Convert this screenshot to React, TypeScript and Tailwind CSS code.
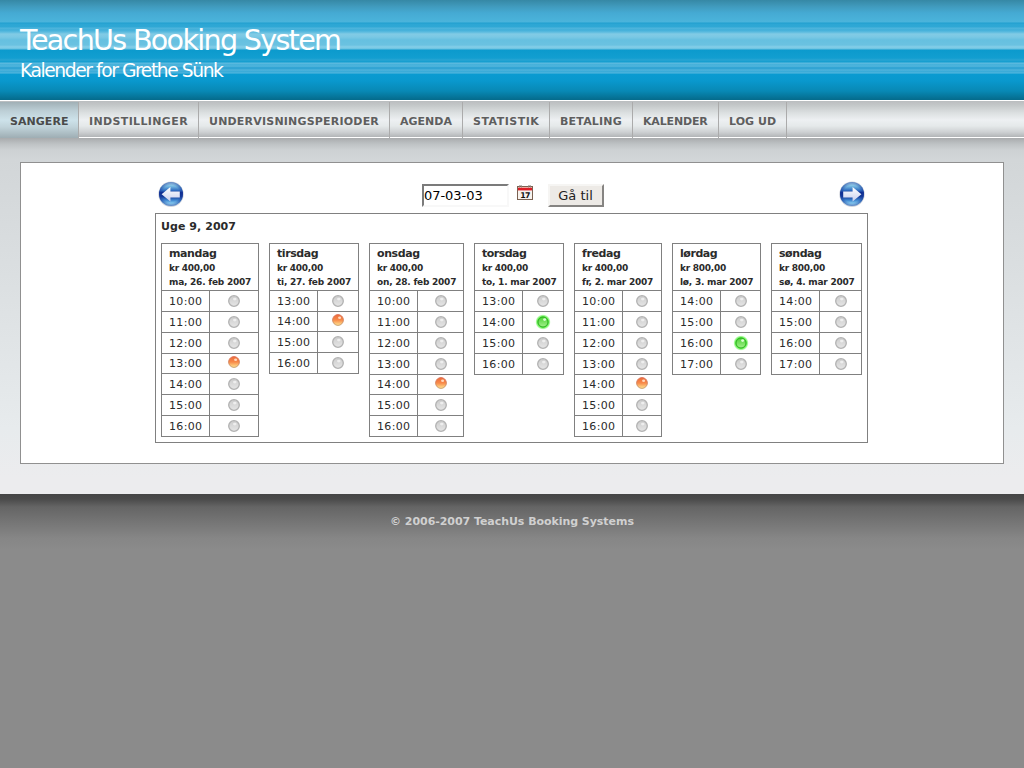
type LedState = 'free' | 'busy' | 'open';

type Day = {
  name: string;
  nameTracking: string;
  price: string;
  date: string;
  width: string;
  slots: [string, LedState][];
};

const NAV = [
  { label: 'SANGERE', cls: 'w-[79px] tracking-[0.05px]' },
  { label: 'INDSTILLINGER', cls: 'w-[120px] tracking-[0.36px]' },
  { label: 'UNDERVISNINGSPERIODER', cls: 'w-[191px] tracking-[0.2px]' },
  { label: 'AGENDA', cls: 'w-[73px] tracking-[0.02px]' },
  { label: 'STATISTIK', cls: 'w-[87px] tracking-[0.5px]' },
  { label: 'BETALING', cls: 'w-[83px] tracking-[0.2px]' },
  { label: 'KALENDER', cls: 'w-[86px] tracking-[-0.15px]' },
  { label: 'LOG UD', cls: 'w-[68px] tracking-[0.05px]' },
];

function slots(from: number, to: number, marks: Record<number, LedState> = {}): [string, LedState][] {
  const list: [string, LedState][] = [];
  for (let h = from; h <= to; h++) list.push([`${h}:00`, marks[h] ?? 'free']);
  return list;
}

const DAYS: Day[] = [
  { name: 'mandag', nameTracking: 'tracking-[-0.4px]', price: 'kr 400,00', date: 'ma, 26. feb 2007', width: 'w-[98px]', slots: slots(10, 16, { 13: 'busy' }) },
  { name: 'tirsdag', nameTracking: 'tracking-[-0.42px]', price: 'kr 400,00', date: 'ti, 27. feb 2007', width: 'w-[90px]', slots: slots(13, 16, { 14: 'busy' }) },
  { name: 'onsdag', nameTracking: 'tracking-[-0.42px]', price: 'kr 400,00', date: 'on, 28. feb 2007', width: 'w-[95px]', slots: slots(10, 16, { 14: 'busy' }) },
  { name: 'torsdag', nameTracking: 'tracking-[-0.52px]', price: 'kr 400,00', date: 'to, 1. mar 2007', width: 'w-[90px]', slots: slots(13, 16, { 14: 'open' }) },
  { name: 'fredag', nameTracking: 'tracking-[-0.38px]', price: 'kr 400,00', date: 'fr, 2. mar 2007', width: 'w-[88px]', slots: slots(10, 16, { 14: 'busy' }) },
  { name: 'lørdag', nameTracking: 'tracking-[-0.45px]', price: 'kr 800,00', date: 'lø, 3. mar 2007', width: 'w-[89px]', slots: slots(14, 17, { 16: 'open' }) },
  { name: 'søndag', nameTracking: 'tracking-[-0.43px]', price: 'kr 800,00', date: 'sø, 4. mar 2007', width: 'w-[91px]', slots: slots(14, 17) },
];

function Gradients() {
  return (
    <svg className="absolute size-0" aria-hidden="true">
      <defs>
        <linearGradient id="led-free" x1="0" y1="0" x2="0" y2="1">
          <stop offset="0" stopColor="#cccccc" />
          <stop offset="1" stopColor="#e6e6e6" />
        </linearGradient>
        <linearGradient id="led-busy" x1="0" y1="0" x2="0" y2="1">
          <stop offset="0" stopColor="#ec6a3a" />
          <stop offset="0.5" stopColor="#f88a4a" />
          <stop offset="1" stopColor="#ffe692" />
        </linearGradient>
        <linearGradient id="led-busy-rim" x1="0" y1="0" x2="0" y2="1">
          <stop offset="0" stopColor="#dd6a50" />
          <stop offset="1" stopColor="#c49a6a" />
        </linearGradient>
        <linearGradient id="led-open" x1="0" y1="0" x2="0" y2="1">
          <stop offset="0" stopColor="#4cd236" />
          <stop offset="1" stopColor="#a2f08a" />
        </linearGradient>
        <radialGradient id="led-glow">
          <stop offset="0.7" stopColor="#5cf048" />
          <stop offset="0.85" stopColor="#8cf57c" stopOpacity="0.75" />
          <stop offset="1" stopColor="#c8ffc0" stopOpacity="0" />
        </radialGradient>
        <linearGradient id="arrow-disc" x1="0" y1="0" x2="0" y2="1">
          <stop offset="0" stopColor="#c2e8f4" />
          <stop offset="0.18" stopColor="#74b8e0" />
          <stop offset="0.36" stopColor="#2c68be" />
          <stop offset="0.44" stopColor="#0c2a90" />
          <stop offset="0.6" stopColor="#123798" />
          <stop offset="0.76" stopColor="#3f86d0" />
          <stop offset="0.9" stopColor="#8ed4f4" />
          <stop offset="1" stopColor="#b8e8f8" />
        </linearGradient>
        <radialGradient id="arrow-edge">
          <stop offset="0.72" stopColor="#1c3c9c" stopOpacity="0" />
          <stop offset="1" stopColor="#1c3c9c" stopOpacity="0.6" />
        </radialGradient>
        <linearGradient id="arrow-shape" x1="0" y1="0" x2="0" y2="1">
          <stop offset="0" stopColor="#ffffff" />
          <stop offset="1" stopColor="#c8cfee" />
        </linearGradient>
      </defs>
    </svg>
  );
}

function Led({ state }: { state: LedState }) {
  if (state === 'open') {
    return (
      <svg viewBox="0 0 16 16" className="size-4">
        <circle cx="8" cy="8" r="7.8" fill="url(#led-glow)" />
        <circle cx="8" cy="8" r="5" fill="url(#led-open)" stroke="#2fae22" />
        <ellipse cx="9.6" cy="5.6" rx="1.5" ry="1.3" fill="#dcfbd4" />
      </svg>
    );
  }
  if (state === 'busy') {
    return (
      <svg viewBox="0 0 16 16" className="size-4 -translate-y-0.5">
        <circle cx="8" cy="8" r="5.4" fill="url(#led-busy)" stroke="url(#led-busy-rim)" strokeWidth="0.9" />
        <ellipse cx="9.6" cy="5.8" rx="1.5" ry="1.3" fill="#ffd9bd" />
      </svg>
    );
  }
  return (
    <svg viewBox="0 0 16 16" className="size-4">
      <circle cx="8" cy="8" r="5.3" fill="url(#led-free)" stroke="#b2b2b2" strokeWidth="1.3" />
      <ellipse cx="8.8" cy="6.1" rx="1.8" ry="1.3" fill="#f2f2f2" fillOpacity="0.85" />
    </svg>
  );
}

function ArrowButton({ next }: { next?: boolean }) {
  return (
    <button className="size-[26px]" aria-label={next ? 'Næste uge' : 'Forrige uge'}>
      <svg viewBox="0 0 26 26" className={next ? 'block size-[26px] -scale-x-100' : 'block size-[26px]'}>
        <circle cx="13" cy="13.2" r="12.7" fill="#d0d4dc" />
        <circle cx="13" cy="13" r="12" fill="url(#arrow-disc)" />
        <circle cx="13" cy="13" r="12" fill="url(#arrow-edge)" />
        <path d="M3.6 13.2 L12.4 6 V10.4 H21.8 V16.4 H12.4 V20.6 Z" fill="url(#arrow-shape)" />
      </svg>
    </button>
  );
}

function CalendarIcon() {
  return (
    <svg viewBox="0 0 16 16" className="size-4">
      <rect x="0.5" y="1.5" width="15" height="13" fill="#f8f3ee" stroke="#7a6252" />
      <rect x="1" y="3" width="14" height="2.4" fill="#de1c26" />
      <rect x="1" y="2" width="14" height="1" fill="#f0a8a0" />
      <path d="M2.5 2.6V1a1 1 0 0 1 2 0v1.6M11.5 2.6V1a1 1 0 0 1 2 0v1.6" fill="none" stroke="#8c8078" strokeWidth="0.8" />
      <text x="8" y="12.8" textAnchor="middle" fontSize="7.8" fontWeight="700" fill="#111" fontFamily="'DejaVu Sans', sans-serif" letterSpacing="-0.6">17</text>
    </svg>
  );
}

function DayColumn({ day }: { day: Day }) {
  return (
    <section className={`${day.width} shrink-0 border border-[#808080]`}>
      <div className="h-[47px] border-b border-[#808080] pt-[2px] pl-[7px] font-bold whitespace-nowrap">
        <h3 className={`text-[11px] leading-[15px] ${day.nameTracking}`}>{day.name}</h3>
        <p className="text-[9px] leading-[14px] tracking-[-0.25px]">{day.price}</p>
        <p className="text-[9px] leading-[14px] tracking-[-0.23px]">{day.date}</p>
      </div>
      <div className="divide-y divide-[#808080]">
        {day.slots.map(([time, state]) => (
          <div key={time} className={state === 'busy' ? 'flex h-[20px] leading-5 last:h-[19px]' : 'flex h-[21px] leading-[22px] last:h-5'}>
            <span className="w-[48px] border-r border-[#808080] pl-[7px] text-[11px] tracking-[0.32px]">{time}</span>
            <span className="flex h-5 flex-1 items-center justify-center"><Led state={state} /></span>
          </div>
        ))}
      </div>
    </section>
  );
}

export default function App() {
  return (
    <div className="flex min-h-screen flex-col bg-[#8b8b8b] text-[#2b2b2b] [font-family:'DejaVu_Sans',Verdana,sans-serif]">
      <Gradients />
      <header className="h-[100px] bg-[linear-gradient(180deg,#3688a5_0px,#419cbf_7px,#45aad3_13px,#4bb4db_22px,#209fcf_23px,#2ca6d4_24px,#2fa8d5_27px,#4fb5dc_28px,#41afd9_30px,#5bbbdf_32px,#82cbe5_34px,#7ac8e4_37px,#66c0e0_40px,#6ac2e1_45px,#86cfe8_47px,#68c1e1_49px,#0c9acd_50px,#129ed0_58px,#28a5d3_60px,#119dcf_62px,#62bce0_63px,#3faed9_65px,#56b8de_66px,#279fd1_68px,#4fb3dc_70px,#35a9d7_72px,#5ab9df_73px,#0a9bd1_74px,#0998cd_81px,#0889b5_91px,#056a8b_100px)] pt-[25px] pl-5 text-white">
        <h1 className="text-[28.6px] leading-[30px] tracking-[-1.7px] whitespace-nowrap">TeachUs Booking System</h1>
        <h2 className="mt-1 text-[18.7px] leading-6 tracking-[-1.43px] whitespace-nowrap">Kalender for Grethe Sünk</h2>
      </header>
      <nav className="flex h-[38px] border-y border-white bg-[linear-gradient(180deg,#babdbf_0px,#c3c7c8_4px,#dce0e1_12px,#edf0f2_19px,#e5e9ea_25px,#ced1d3_31px,#b2b5b7_36px)] pt-px text-[11px] font-bold text-[#5e5e5e]">
        {NAV.map((item, i) => (
          <a
            key={item.label}
            className={`${item.cls} h-9 shrink-0 border-r border-[#ababab] pl-[10px] leading-[39px] whitespace-nowrap ${i === 0 ? 'bg-[linear-gradient(180deg,#a0b0b6_0px,#bdcfd6_9px,#cde2ea_18px,#c0d3da_25px,#9eadb3_36px)] text-[#4a4a4a]' : ''}`}
          >
            {item.label}
          </a>
        ))}
      </nav>
      <main className="h-[356px] bg-[linear-gradient(180deg,#a9abad_0px,#bec2c4_6px,#cdd1d3_12px,#d2d6d8_22px,#dce0e2_150px,#e7ebed_290px,#ececee_340px)] px-5 pt-6">
        <div className="h-[302px] border border-[#909090] bg-white pt-[18px] pl-[134px]">
          <div className="flex h-8 items-start pl-[3px]">
            <ArrowButton />
            <input
              className="mt-[3px] ml-[238px] h-[23px] w-[87px] border-2 border-t-[#7b7b7b] border-r-[#f8f8f8] border-b-[#f8f8f8] border-l-[#7b7b7b] bg-white text-[13px] leading-[19px] tracking-[-0.05px] text-black"
              defaultValue="07-03-03"
            />
            <span className="mt-1 ml-2"><CalendarIcon /></span>
            <button className="mt-[3px] ml-[15px] h-[23px] w-[56px] border-2 border-t-[#f6f5f3] border-r-[#868482] border-b-[#868482] border-l-[#f6f5f3] bg-[#edeae6] pr-px text-[13px] leading-[19px] text-[#222]">Gå til</button>
            <span className="ml-[235px]"><ArrowButton next /></span>
          </div>
          <div className="h-[230px] w-[713px] border border-[#808080] pl-[5px]">
            <h2 className="h-[29px] pt-[5px] text-[11px] leading-4 font-bold tracking-[0.06px]">Uge 9, 2007</h2>
            <div className="flex items-start gap-[10px]">
              {DAYS.map((day) => <DayColumn key={day.name} day={day} />)}
            </div>
          </div>
        </div>
      </main>
      <footer className="h-[60px] bg-[linear-gradient(180deg,#454545_0px,#4a4a4a_5px,#656565_13px,#737373_26px,#868686_44px,#8b8b8b_56px)] pt-[21px] text-center text-[11px] leading-[14px] font-bold tracking-[-0.05px] text-[#d0d0d0]">
        © 2006-2007 TeachUs Booking Systems
      </footer>
    </div>
  );
}
